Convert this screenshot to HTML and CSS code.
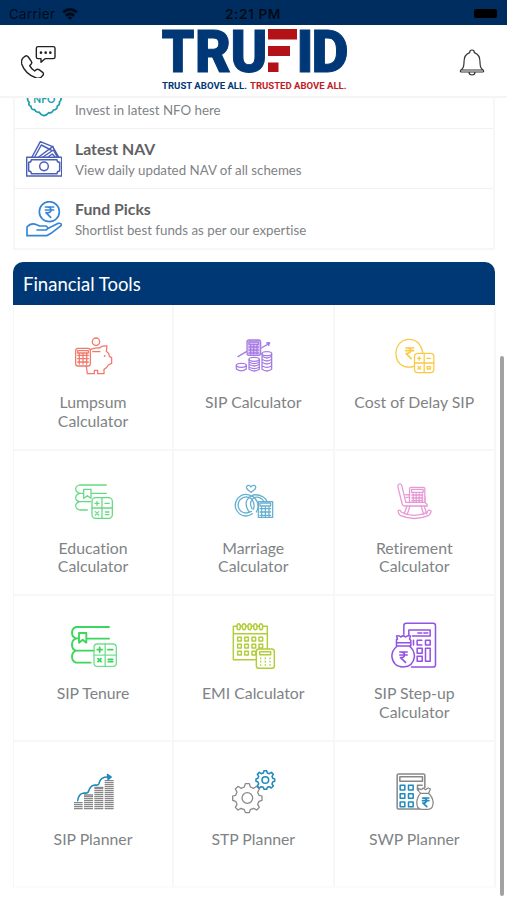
FILE: index.html
```html
<!DOCTYPE html>
<html lang="en">
<head>
    <meta charset="UTF-8">
    <meta name="viewport" content="width=device-width, initial-scale=1.0">
    <title>Trufid</title>
    <link rel="stylesheet" href="styles.css">
</head>
<body>
    <div class="status-bar">
        <div class="carrier">
            <span>Carrier</span>
            <svg width="18" height="13" viewBox="0 0 54 39"><path d="M3 13Q27-7 51 13L45 19Q27 4 9 19Z"/><path d="M12 23Q27 9 42 23L36 29Q27 20 18 29Z"/><path d="M20 32Q27 25 34 32L27 38Z"/></svg>
        </div>
        <div class="time">2:21 PM</div>
        <div class="battery"><span></span></div>
    </div>

    <header class="header">
        <svg class="icon-call" width="36" height="34" viewBox="0 0 108 102">
            <path d="M51 8h46q5 0 5 5v26q0 5-5 5H72L60 55V44h-9q-5 0-5-5V13q0-5 5-5z"/>
            <path d="M5 43l7-6q6-4 10 2l9 13q3 5-1 9l-4 4q5 10 15 16l5-4q4-3 8 0l11 8q4 4 1 9l-6 6q-7 5-16 1Q13 90 2 60 0 49 5 43z"/>
            <g class="dots"><circle cx="60" cy="26" r="4"/><circle cx="74" cy="26" r="4"/><circle cx="88" cy="26" r="4"/></g>
        </svg>
        <svg class="logo" width="190" height="70" viewBox="160 26 190 70">
            <g class="logo-name">
                <text x="161.5" y="71.500" textLength="33" lengthAdjust="spacingAndGlyphs">T</text>
                <text x="195" y="71.500" textLength="36" lengthAdjust="spacingAndGlyphs">R</text>
                <text x="230.500" y="71.500" textLength="37" lengthAdjust="spacingAndGlyphs">U</text>
                <text x="296.500" y="71.500" textLength="17" lengthAdjust="spacingAndGlyphs">I</text>
                <text x="311.500" y="71.500" textLength="37" lengthAdjust="spacingAndGlyphs">D</text>
            </g>
            <path class="logo-f" d="M268 29h29v10.500h-29zM268 46h22v10h-22zM268 62.500h10.500V72H268z"/>
            <text class="tagline" x="162" y="88.500" textLength="85" lengthAdjust="spacingAndGlyphs">TRUST ABOVE ALL.</text>
            <text class="tagline red" x="250" y="88.500" textLength="96.500" lengthAdjust="spacingAndGlyphs">TRUSTED ABOVE ALL.</text>
        </svg>
        <svg class="icon-bell" width="26" height="28" viewBox="0 0 78 84">
            <path d="M32 14q0-8 7-8t7 8q17 6 17 28 0 15 5 20 6 4 6 8 0 2-3 2H7q-3 0-3-2 0-4 6-8 5-5 5-20 0-22 17-28M30 72q0 9 9 9t9-9M6 66h66"/>
        </svg>
    </header>

    <main class="content">
        <ul class="fund-list">
            <li class="fund-row first">
                <svg class="nfo" width="36" height="19" viewBox="79 294 108 57">
                    <text x="101" y="308" textLength="66">NFO</text>
                    <path d="M86 290q-6 9 3 17-5 8 5 12 0 11 11 10 4 10 13 7 6 10 14 11 9-1 15-9 10 3 14-8 12 0 12-12 9-5 6-12 9-8 3-16"/>
                </svg>
                <p>Invest in latest NFO here</p>
            </li>
            <li class="fund-row">
                <svg class="nav-icon" width="36" height="36" viewBox="79 138 108 108">
                    <path d="M81 187h105v56H81zM95 194h77q0 8 8 8v26q-8 0-8 8H95q0-8-8-8v-26q8 0 8-8z"/>
                    <circle cx="133" cy="214" r="13"/>
                    <path d="M97 186l25-46 37 15 18 31M105 186l20-36 29 15M117 186l43-32M130 186l31-21 12 21M145 186l13-9 8 9"/>
                </svg>
                <div>
                    <h3>Latest NAV</h3>
                    <p>View daily updated NAV of all schemes</p>
                </div>
            </li>
            <li class="fund-row">
                <svg class="pick-icon" width="36" height="36" viewBox="79 319 108 108">
                    <circle cx="149" cy="351" r="30"/>
                    <path d="M137 337h25M137 346h25M140 337q14-1 14 9t-15 8l14 14"/>
                    <path d="M82 424v-27q12-14 29-7l9 4h20q9 8-1 12h-27M143 402l33-16q10-1 9 6l-31 24-13 7H82"/>
                </svg>
                <div>
                    <h3>Fund Picks</h3>
                    <p>Shortlist best funds as per our expertise</p>
                </div>
            </li>
        </ul>

        <section class="tools">
            <h2>Financial Tools</h2>
            <div class="tools-grid">
                <div class="tool">
                    <svg class="coral" viewBox="9 18 180 150">
                        <circle cx="108" cy="50" r="11"/>
                        <rect x="47" y="70" width="44" height="53" rx="7"/>
                        <path d="M53 77h32v7H53zM53 91h32M53 101h32M53 111h32M58 87v30M69 87v30M80 87v30"/>
                        <path d="M91 74q11-6 27-5 9-8 23-6l-2 16q9 6 9 15l7 4v17l-10 5q-4 9-13 13v13h-19v-10h-10v10H82l-3-23M98 80h22"/>
                        <circle cx="134" cy="93" r="1"/>
                    </svg>
                    <span>Lumpsum<br>Calculator</span>
                </div>
                <div class="tool">
                    <svg class="violet" viewBox="490 18 180 150">
                        <rect class="tint" x="562" y="45" width="41" height="46" rx="6"/>
                        <path d="M568 51h29v7h-29zM568 66h29M568 75h29M568 84h29M573 61v26M582 61v26M592 61v26"/>
                        <path d="M535 95l25-15M605 69l24-14M621 54l9-1-3 9"/>
                        <path d="M530 121v11q15 11 30 0v-11M568 104v29q16 10 31 0v-29M568 111q16 10 31 0M568 118q16 10 31 0M568 126q16 10 31 0M607 86v47q15 10 29 0V86M607 94q15 10 29 0M607 103q15 10 29 0M607 112q15 10 29 0M607 122q15 10 29 0"/>
                        <ellipse cx="545" cy="121" rx="15" ry="6"/><ellipse cx="583.500" cy="103" rx="15.500" ry="6"/><ellipse cx="621.500" cy="86" rx="14.500" ry="6"/>
                    </svg>
                    <span>SIP Calculator</span>
                </div>
                <div class="tool">
                    <svg class="yellow" viewBox="13.5 18 180 150">
                        <path d="M103 124q-14 5-29 0-25-9-25-41 3-34 34-40 39-3 47 41"/>
                        <path class="rupee" d="M79 69h23M79 77h23M82 69q13 0 12 8t-14 9l15 15"/>
                        <rect x="105" y="85" width="58" height="58" rx="10"/>
                        <path d="M134 85v58M105 114h58M114 100h10M119 95v10M142 100h11M115 124l9 9M124 124l-9 9M143 125h10v7h-10z"/>
                    </svg>
                    <span>Cost of Delay SIP</span>
                </div>

                <div class="tool">
                    <svg class="green" viewBox="9 6 180 150">
                        <path d="M139 30H58q-11 3-11 12t12 13h12M96 55h43M59 55q-12 4-12 13t12 12h34M59 80q-12 4-12 13t12 12h23M71 43h22v27l-11-8-11 8z"/>
                        <rect x="96" y="68" width="61" height="62" rx="11"/>
                        <path d="M126 68v62M96 99h61M105 85h12M111 79v12M135 85h13M106 110l10 10M116 110l-10 10M136 111h11M136 119h11"/>
                    </svg>
                    <span>Education<br>Calculator</span>
                </div>
                <div class="tool">
                    <svg class="blue" viewBox="490 6 180 150">
                        <path d="M574 52q-20-14-11-20 7-3 11 4 5-7 12-4 8 8-12 20z"/>
                        <path d="M578 116q-20 14-39 0-22-21-5-46 20-22 48-4 22 21 8 45"/>
                        <path d="M575 109q-18 10-31 0-16-17-3-35 16-15 34-3 13 16 6 32M569 111q-15-20-7-36 18-26 49-9 8 6 10 12M577 101q-12-21 9-34 15-4 26 11"/>
                        <path class="cutout" d="M596 80h43v47h-43z"/>
                        <path d="M601 84h32v9h-32zM601 101h32M601 111h32M601 121h32M606 97v28M617 97v28M628 97v28"/>
                    </svg>
                    <span>Marriage<br>Calculator</span>
                </div>
                <div class="tool">
                    <svg class="pink" viewBox="13.5 6 180 150">
                        <path d="M58 28q6-4 9 4l12 50h57q9 5 7 11H75q-5 0-7-6L55 35q0-5 3-7zM57 106q5-3 8 5 37 20 78 1 4-10 11-5 3 5-6 14-43 19-86 0-9-10-5-15z"/>
                        <path d="M82 94l-8 23M91 94l-8 25M125 94l8 25M134 94l8 23M77 59l13 1v7H79M137 65v17M90 83V42q0-5 5-5h36q5 0 5 5v40M96 43h35v9H96zM97 60h33M97 69h33M97 77h33M101 56v26M110 56v26M119 56v26M128 56v26"/>
                    </svg>
                    <span>Retirement<br>Calculator</span>
                </div>

                <div class="tool">
                    <svg class="green bold" viewBox="9 24 180 150">
                        <path d="M147 39H48q-12 4-12 17t12 17h9M79 74h68M48 74q-12 4-12 18t12 18h54M48 110q-12 5-12 18t12 18h44M57 57h22v29l-11-9-11 9z"/>
                        <g class="light"><rect x="102" y="90" width="67" height="67" rx="10"/><path d="M135.500 90v67M102 123.500h67"/></g>
                        <path d="M112 107h14M119 100v14M144 107h14M114 134l9 9M123 134l-9 9M145 136h13M145 143h13"/>
                    </svg>
                    <span>SIP Tenure</span>
                </div>
                <div class="tool">
                    <svg class="lime" viewBox="490 24 180 150">
                        <path d="M588 137h-67V37h102v67M521 59h102"/>
                        <g class="rings"><ellipse cx="537" cy="38" rx="5" ry="9"/><ellipse cx="553" cy="38" rx="5" ry="9"/><ellipse cx="570" cy="38" rx="5" ry="9"/><ellipse cx="587" cy="38" rx="5" ry="9"/><ellipse cx="604" cy="38" rx="5" ry="9"/></g>
                        <path d="M534 70h11v11h-11zM555 70h11v11h-11zM577 70h11v11h-11zM598 70h11v11h-11zM534 91h11v11h-11zM555 91h11v11h-11zM577 91h11v11h-11zM598 91h11v11h-11zM534 112h11v11h-11zM555 112h11v11h-11zM577 112h11v11h-11z"/>
                        <rect class="cutout" x="590" y="105" width="54" height="58" rx="8"/>
                        <path d="M600 113h33v9h-33z"/>
                        <path class="dotted" d="M601 133h34M601 143h34M601 153h34"/>
                    </svg>
                    <span>EMI Calculator</span>
                </div>
                <div class="tool">
                    <svg class="violet deep" viewBox="13.5 24 180 150">
                        <path d="M73 61V35q0-7 7-7h81q7 0 7 7v117q0 7-7 7H96"/>
                        <path d="M88 63V48h64v18H99M115 57h12M133 57h12M102 79v14M127 79h-14v14h14M138 79h14v14h-14zM113 103h15v15h-15zM138 103h14v39h-14zM113 127h15v15h-15z"/>
                        <path d="M51 86v-9l3-2-3-9q9-3 13 3 7-7 14 0 7-5 15-3l-3 9 4 4v7zM51 86v10h43V86M53 96q-16 14-16 30 3 32 34 33 30-1 34-32-1-20-16-31"/>
                        <path class="rupee" d="M61 114h22M61 123h22M63 114q13 0 12 9t-12 8l15 14"/>
                    </svg>
                    <span>SIP Step-up<br>Calculator</span>
                </div>

                <div class="tool">
                    <svg class="gray" viewBox="9 27 180 150">
                        <path class="bars" d="M42 149h26M42 143h26M42 137h26M42 131h26M72 149h27M72 143h27M72 137h27M72 131h27M72 125h27M72 119h27M72 113h27M72 108h27M103 149h27M103 143h27M103 137h27M103 131h27M103 125h27M103 119h27M103 113h27M103 107h27M103 101h27M103 95h27M103 89h27M103 85h27M134 149h27M134 143h27M134 137h27M134 131h27M134 125h27M134 119h27M134 113h27M134 107h27M134 101h27M134 95h27M134 89h27M134 83h27M134 77h27M134 71h27M134 65h27"/>
                        <path class="accent" d="M53 125q3-22 19-23 12 2 14-6 5-17 19-18 13 2 13-8 5-17 27-16"/>
                        <path class="accent-fill" d="M142 46l12 8-10 8z"/>
                    </svg>
                    <span>SIP Planner</span>
                </div>
                <div class="tool">
                    <svg class="gray" viewBox="490 27 180 150">
                        <path d="M557 74h12l3 10 10 4 9-6 8 8-5 10 4 9 9 2v13l-9 3-4 9 5 9-8 8-9-5-10 4-3 9h-12l-3-9-10-4-9 5-8-8 5-9-4-9-9-3v-13l9-2 4-9-5-10 8-8 9 6 10-4z"/>
                        <circle cx="563" cy="117" r="16"/>
                        <g class="accent"><path d="M613 35h8l2 7 6 2 6-4 6 6-4 6 2 6 6 2v7l-6 2-2 6 4 6-6 6-6-4-6 2-2 6h-8l-2-6-6-2-6 4-6-6 4-6-2-6-6-2v-7l6-2 2-6-4-6 6-6 6 4 6-2z"/><circle cx="617" cy="63" r="10"/></g>
                    </svg>
                    <span>STP Planner</span>
                </div>
                <div class="tool">
                    <svg class="gray" viewBox="13.5 27 180 150">
                        <path class="case" d="M120 150H56q-3 0-3-4V49q0-4 4-4h75q4 0 4 4v37M61 53h68v14H61zM114 93V79h14"/>
                        <path class="accent" d="M62 79h14v14H62zM87 79h14v14H87zM62 104h14v14H62zM87 104h14v14H87zM62 129h14v14H62zM87 129h14v14H87z"/>
                        <path class="cutout" d="M123 103q-8-7-7-15l9 4 6-5 7 5 8-5 7 3-6 13q12 10 14 27 0 20-14 21h-22q-14-2-13-21 1-17 11-27zM123 103h24"/>
                        <path class="accent rupee" d="M129 117h19M129 125h19M130 117q12 0 11 8t-11 7l12 11"/>
                    </svg>
                    <span>SWP Planner</span>
                </div>
            </div>
        </section>
    </main>
    <div class="scrollbar"></div>
</body>
</html>
```
FILE: styles.css
```css
* {
    box-sizing: border-box;
}
body {
    margin: 0;
    height: 900px;
    overflow: hidden;
    background-color: #fff;
    font-family: Lato, sans-serif;
    font-variant-ligatures: none;
    color: #808386;
}
h2, h3, p, ul {
    margin: 0;
    padding: 0;
}
svg {
    fill: none;
    stroke-linecap: round;
    stroke-linejoin: round;
}
.status-bar {
    display: grid;
    grid-template-columns: 1fr auto 1fr;
    align-items: center;
    height: 25px;
    padding: 2px 10px 0 9px;
    background-color: #002d60;
    color: #000b18;
    font-family: Inter, sans-serif;
    font-size: 13.3px;
}
.carrier {
    display: flex;
    align-items: center;
    gap: 6px;
    letter-spacing: 0.4px;
}
.carrier svg {
    fill: #000b18;
}
.time {
    font-size: 13.6px;
    font-weight: 600;
    letter-spacing: 0.6px;
}
.battery {
    display: flex;
    justify-content: flex-end;
}
.battery span {
    width: 23px;
    height: 9px;
    border-radius: 2px;
    background-color: #000;
}
.header {
    display: flex;
    justify-content: space-between;
    height: 73px;
    padding: 0 22px 0 21px;
    border-bottom: 2px solid #f5f5f5;
}
.icon-call {
    margin-top: 19px;
    stroke: #222;
    stroke-width: 4.2;
}
.dots {
    fill: #222;
    stroke: none;
}
.logo {
    margin-top: 1px;
    margin-right: 6px;
    overflow: visible;
}
.logo-name {
    fill: #003877;
    stroke: #003877;
    stroke-width: 1;
    stroke-linejoin: miter;
    font-family: Roboto, sans-serif;
    font-size: 59px;
    font-weight: 900;
}
.logo-f {
    fill: #b31217;
}
.tagline {
    fill: #003877;
    font-family: Roboto, sans-serif;
    font-size: 9.6px;
    font-weight: 700;
}
.tagline.red {
    fill: #c11c25;
}
.icon-bell {
    margin-top: 23px;
    stroke: #333;
    stroke-width: 3.6;
}
.content {
    padding: 0 12px 0 13px;
}
.fund-list {
    list-style: none;
    border: solid #f7f7f7;
    border-width: 0 2px 2px;
}
.fund-row {
    display: flex;
    align-items: center;
    gap: 13px;
    height: 60px;
    padding: 0 11px;
    border-top: 1px solid #f1f1f1;
}
.fund-row.first {
    align-items: flex-start;
    height: 30px;
    border-top: 0;
}
.fund-row.first p {
    margin-top: 3px;
}
.fund-row h3 {
    margin-bottom: 2px;
    color: #5f6164;
    font-size: 15.8px;
    font-weight: 700;
    line-height: 20px;
}
.fund-row p {
    font-size: 13.3px;
    line-height: 18px;
}
.nfo {
    stroke: #1c9dad;
    stroke-width: 5;
}
.nfo text {
    fill: #1c9dad;
    stroke: none;
    font-size: 31px;
    font-weight: 700;
}
.nav-icon {
    stroke: #4b61b8;
    stroke-width: 4.4;
}
.pick-icon {
    stroke: #3684d7;
    stroke-width: 5;
}
.tools {
    margin-top: 12px;
}
.tools h2 {
    height: 43px;
    padding-left: 10px;
    border-radius: 10px 10px 0 0;
    background-color: #003875;
    color: #fff;
    font-size: 18.5px;
    font-weight: 400;
    line-height: 44px;
}
.tools-grid {
    display: grid;
    grid-template-columns: 160px 160.5px 161.5px;
    grid-template-rows: 145.5px 145.5px 145.5px 146.5px;
    border-left: 1px solid #f6f6f6;
}
.tool {
    display: flex;
    flex-direction: column;
    align-items: center;
    padding-top: 26px;
    border-right: 2px solid #f7f7f7;
    border-bottom: 2px solid #f7f7f7;
    font-size: 15.8px;
    line-height: 18.7px;
    text-align: center;
}
.tool:nth-child(n+10) {
    border-bottom-color: #fcfcfc;
}
.tool svg {
    width: 60px;
    height: 50px;
    margin-bottom: 12px;
    stroke-width: 3.8;
}
.cutout {
    fill: #fff;
}
.tool .rupee {
    stroke-width: 5;
}
.coral {
    stroke: #f1786a;
}
.violet {
    stroke: #a67be3;
}
.tint {
    fill: #ddcbf7;
}
.tool .deep {
    stroke: #9252e5;
    stroke-width: 4.6;
}
.yellow {
    stroke: #fac943;
}
.green {
    stroke: #65d982;
}
.tool .bold {
    stroke: #3bd75c;
    stroke-width: 5.6;
}
.bold .light {
    stroke: #76de8e;
    stroke-width: 4;
}
.blue {
    stroke: #66afd1;
}
.pink {
    stroke: #e798d5;
}
.tool .lime {
    stroke: #b0cd3a;
    stroke-width: 4.4;
}
.rings {
    fill: #fff;
}
.dotted {
    stroke-width: 5;
    stroke-dasharray: 4 10;
    stroke-linecap: butt;
}
.gray {
    stroke: #888;
}
.bars {
    stroke-width: 4;
    stroke-linecap: butt;
}
.case {
    stroke-width: 4.6;
}
.accent {
    stroke: #218abd;
    stroke-width: 4.6;
}
.accent-fill {
    fill: #218abd;
    stroke: #218abd;
}
.scrollbar {
    position: absolute;
    top: 356px;
    right: 3px;
    width: 4px;
    height: 540px;
    border-radius: 2px;
    background-color: #a2a2a2;
}
```
